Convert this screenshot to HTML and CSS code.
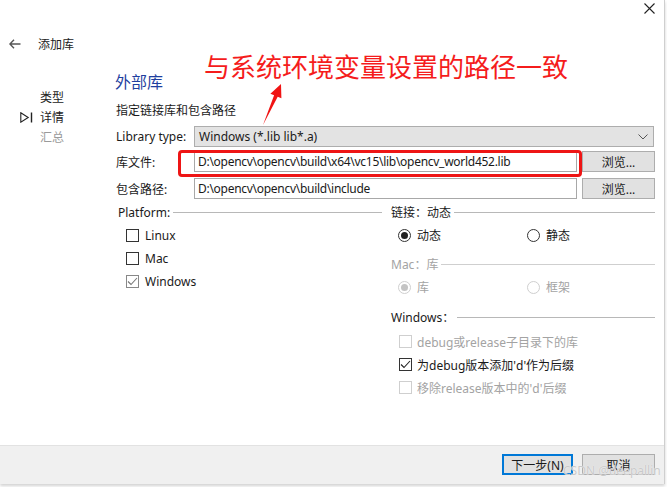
FILE: index.html
```html
<!DOCTYPE html>
<html lang="zh">
<head>
<meta charset="utf-8">
<link rel="stylesheet" href="styles.css">
</head>
<body>
<div class="window">
  <div class="titlebar">
    <svg class="close" width="11" height="11" viewBox="0 0 11 11"><path d="M0.5 0.5L10.5 10.5M10.5 0.5L0.5 10.5" stroke="#222" stroke-width="1.1" fill="none"/></svg>
  </div>
  <div class="header">
    <svg class="back" width="12" height="10" viewBox="0 0 12 10"><path d="M11.5 5H1M5 0.8L0.9 5L5 9.2" stroke="#555" stroke-width="1.4" fill="none"/></svg>
    <span>添加库</span>
  </div>
  <div class="main">
    <nav class="nav">
      <div class="nav-item"><span class="marker"></span><span>类型</span></div>
      <div class="nav-item"><span class="marker"><svg width="13" height="11" viewBox="0 0 13 11"><path d="M0.8 0.8L8.2 5.5L0.8 10.2Z" stroke="#222" stroke-width="1.1" fill="none"/><path d="M11.5 0.5V10.5" stroke="#222" stroke-width="1.4"/></svg></span><span>详情</span></div>
      <div class="nav-item disabled"><span class="marker"></span><span>汇总</span></div>
    </nav>
    <section class="content">
      <h1 class="title">外部库</h1>
      <p class="desc">指定链接库和包含路径</p>
      <div class="form">
        <div class="row row-type">
          <span class="label">Library type:</span>
          <div class="select"><span>Windows (*.lib lib*.a)</span><svg width="10" height="6" viewBox="0 0 10 6"><path d="M0.5 0.5L5 5L9.5 0.5" stroke="#555" stroke-width="1" fill="none"/></svg></div>
        </div>
        <div class="row row-lib">
          <span class="label">库文件:</span>
          <div class="input">D:\opencv\opencv\build\x64\vc15\lib\opencv_world452.lib</div>
          <button class="btn">浏览...</button>
        </div>
        <div class="row row-inc">
          <span class="label">包含路径:</span>
          <div class="input">D:\opencv\opencv\build\include</div>
          <button class="btn">浏览...</button>
        </div>
      </div>
      <div class="groups">
        <div class="group group-left">
          <div class="group-label"><span>Platform:</span><span class="rule"></span></div>
          <div class="opt opt-platform"><span class="cb"></span><span>Linux</span></div>
          <div class="opt opt-platform"><span class="cb"></span><span>Mac</span></div>
          <div class="opt opt-platform"><span class="cb checked soft"><svg width="11" height="9" viewBox="0 0 11 9"><path d="M1 4.5L4 7.5L10 1" stroke="#777" stroke-width="1.1" fill="none"/></svg></span><span>Windows</span></div>
        </div>
        <div class="group group-right">
          <div class="group-label"><span>链接：动态</span><span class="rule"></span></div>
          <div class="radios r-link">
            <div class="opt"><span class="radio on"></span><span>动态</span></div>
            <div class="opt"><span class="radio"></span><span>静态</span></div>
          </div>
          <div class="group-label disabled g-mac"><span>Mac：库</span><span class="rule"></span></div>
          <div class="radios disabled r-mac">
            <div class="opt"><span class="radio on"></span><span>库</span></div>
            <div class="opt"><span class="radio"></span><span>框架</span></div>
          </div>
          <div class="group-label g-win"><span>Windows：</span><span class="rule"></span></div>
          <div class="checks">
            <div class="opt disabled"><span class="cb"></span><span>debug或release子目录下的库</span></div>
            <div class="opt"><span class="cb checked"><svg width="11" height="9" viewBox="0 0 11 9"><path d="M1 4.5L4 7.5L10 1" stroke="#222" stroke-width="1.1" fill="none"/></svg></span><span>为debug版本添加'd'作为后缀</span></div>
            <div class="opt disabled"><span class="cb"></span><span>移除release版本中的'd'后缀</span></div>
          </div>
        </div>
      </div>
    </section>
  </div>
  <div class="footer">
    <button class="btn primary">下一步(N)</button>
    <button class="btn">取消</button>
  </div>

  <div class="annotation">与系统环境变量设置的路径一致</div>
  <svg class="arrow" width="35" height="50" viewBox="0 0 35 50"><polygon points="8,45 19.1,15.2 15.4,13.7 26,4 26.4,18.3 22.7,16.8" fill="#f01414"/></svg>
  <div class="highlight"></div>
  <div class="watermark">CSDN @deepallin</div>
</div>
</body>
</html>
```

FILE: styles.css
```css
* { box-sizing: border-box; }
html, body { margin: 0; padding: 0; background: #ffffff; }
body {
  font-family: "Noto Sans", "Noto Sans CJK SC", sans-serif;
  font-size: 12px;
  color: #1a1a1a;
  width: 667px;
  height: 487px;
  overflow: hidden;
}
.window {
  position: relative;
  width: 665px;
  height: 484px;
  background: #ffffff;
  border-right: 1px solid #cfcfcf;
  display: flex;
  flex-direction: column;
  box-shadow: 0 2px 3px rgba(0,0,0,0.18);
}
.titlebar {
  height: 28px;
  display: flex;
  justify-content: flex-end;
  align-items: flex-start;
  padding: 3px 9px 0 0;
}
.header {
  height: 32px;
  display: flex;
  align-items: center;
  padding-left: 9px;
  gap: 17px;
  font-size: 12px;
  color: #222;
}
.main {
  flex: 1;
  display: flex;
}
.nav {
  width: 116px;
  padding-top: 27px;
  padding-left: 20px;
}
.nav-item {
  height: 20px;
  display: flex;
  align-items: center;
  color: #222;
}
.nav-item.disabled { color: #9a9a9a; }
.marker {
  width: 20px;
  display: flex;
  align-items: center;
}
.content {
  flex: 1;
  padding-right: 9px;
}
.title {
  margin: 11px 0 0 -1px;
  font-size: 16px;
  line-height: 22px;
  font-weight: normal;
  color: #1f3f9f;
}
.desc {
  margin: 9px 0 0 0;
  line-height: 18px;
}
.form {
  margin-top: 6px;
  display: flex;
  flex-direction: column;
}
.row {
  display: flex;
  align-items: center;
  height: 21px;
}
.row-lib { margin-top: 4px; }
.row-inc { margin-top: 6px; }
.label { width: 78px; }
.select {
  flex: 1;
  height: 21px;
  background: #e3e3e3;
  border: 1px solid #adadad;
  display: flex;
  align-items: center;
  justify-content: space-between;
  padding: 0 5px 0 4px;
  margin-right: 1px;
}
.input {
  width: 383px;
  height: 21px;
  border: 1px solid #a8a8a8;
  display: flex;
  align-items: center;
  padding-left: 3px;
  white-space: nowrap;
  letter-spacing: -0.28px;
}
.btn {
  font-family: inherit;
  font-size: 12px;
  color: #1a1a1a;
  background: #e1e1e1;
  border: 1px solid #adadad;
  height: 21px;
  width: 73px;
  margin-left: 5px;
  padding: 0;
}
.groups {
  margin-top: 5px;
  display: grid;
  grid-template-columns: 266px 1fr;
  column-gap: 9px;
}
.group-label {
  height: 16px;
  display: flex;
  align-items: center;
  white-space: nowrap;
}
.group-left .group-label { padding-left: 2px; }
.rule {
  flex: 1;
  height: 1px;
  background: #b8b8b8;
  margin-left: 3px;
}
.group-left .opt-platform {
  height: 23px;
  padding-left: 10px;
}
.group-label + .opt-platform { margin-top: 4px; }
.opt {
  display: flex;
  align-items: center;
  white-space: nowrap;
}
.cb {
  width: 13px;
  height: 13px;
  border: 1px solid #333;
  margin-right: 6px;
  display: flex;
  align-items: center;
  justify-content: center;
  background: #fff;
}
.cb.soft { border-color: #888; }
.opt.disabled { color: #a3a3a3; }
.opt.disabled .cb { border-color: #cfcfcf; }
.radios {
  display: grid;
  grid-template-columns: 129px 1fr;
  height: 22px;
  padding-left: 7px;
}
.r-link { margin-top: 4px; }
.g-mac { margin-top: 10px; }
.r-mac { margin-top: 4px; }
.g-win { margin-top: 11px; }
.radio {
  width: 13px;
  height: 13px;
  border: 1px solid #333;
  border-radius: 50%;
  margin-right: 6px;
  display: flex;
  align-items: center;
  justify-content: center;
  background: #fff;
}
.radio.on::after {
  content: "";
  width: 7px;
  height: 7px;
  border-radius: 50%;
  background: #222;
}
.group-label.disabled { color: #a3a3a3; }
.group-label.disabled .rule { background: #cfcfcf; }
.radios.disabled { color: #a3a3a3; }
.radios.disabled .radio { border-color: #cfcfcf; }
.radios.disabled .radio.on::after { background: #c4c4c4; }
.checks {
  margin-top: 5px;
  padding-left: 8px;
}
.checks .opt { height: 23px; }
.checks .cb { margin-right: 5px; }
.footer {
  height: 39px;
  background: #f0f0f0;
  border-top: 1px solid #e2e2e2;
  display: flex;
  justify-content: flex-end;
  align-items: flex-start;
  padding: 8px 9px 0 0;
  gap: 4px;
}
.btn.primary {
  width: 71px;
  border: 2px solid #0078d7;
}
.annotation {
  position: absolute;
  left: 204px;
  top: 49px;
  font-family: "Noto Sans CJK SC", sans-serif;
  font-size: 26px;
  line-height: 34px;
  color: #f51c1c;
  white-space: nowrap;
}
.arrow {
  position: absolute;
  left: 255px;
  top: 80px;
}
.highlight {
  position: absolute;
  left: 178px;
  top: 150px;
  width: 404px;
  height: 27px;
  border: 3px solid #ee1515;
  border-radius: 4px;
}
.watermark {
  position: absolute;
  left: 563px;
  top: 462px;
  font-size: 12px;
  color: #c9c9c9;
  text-shadow: 0 0 1px #ffffff;
  white-space: nowrap;
}
```
